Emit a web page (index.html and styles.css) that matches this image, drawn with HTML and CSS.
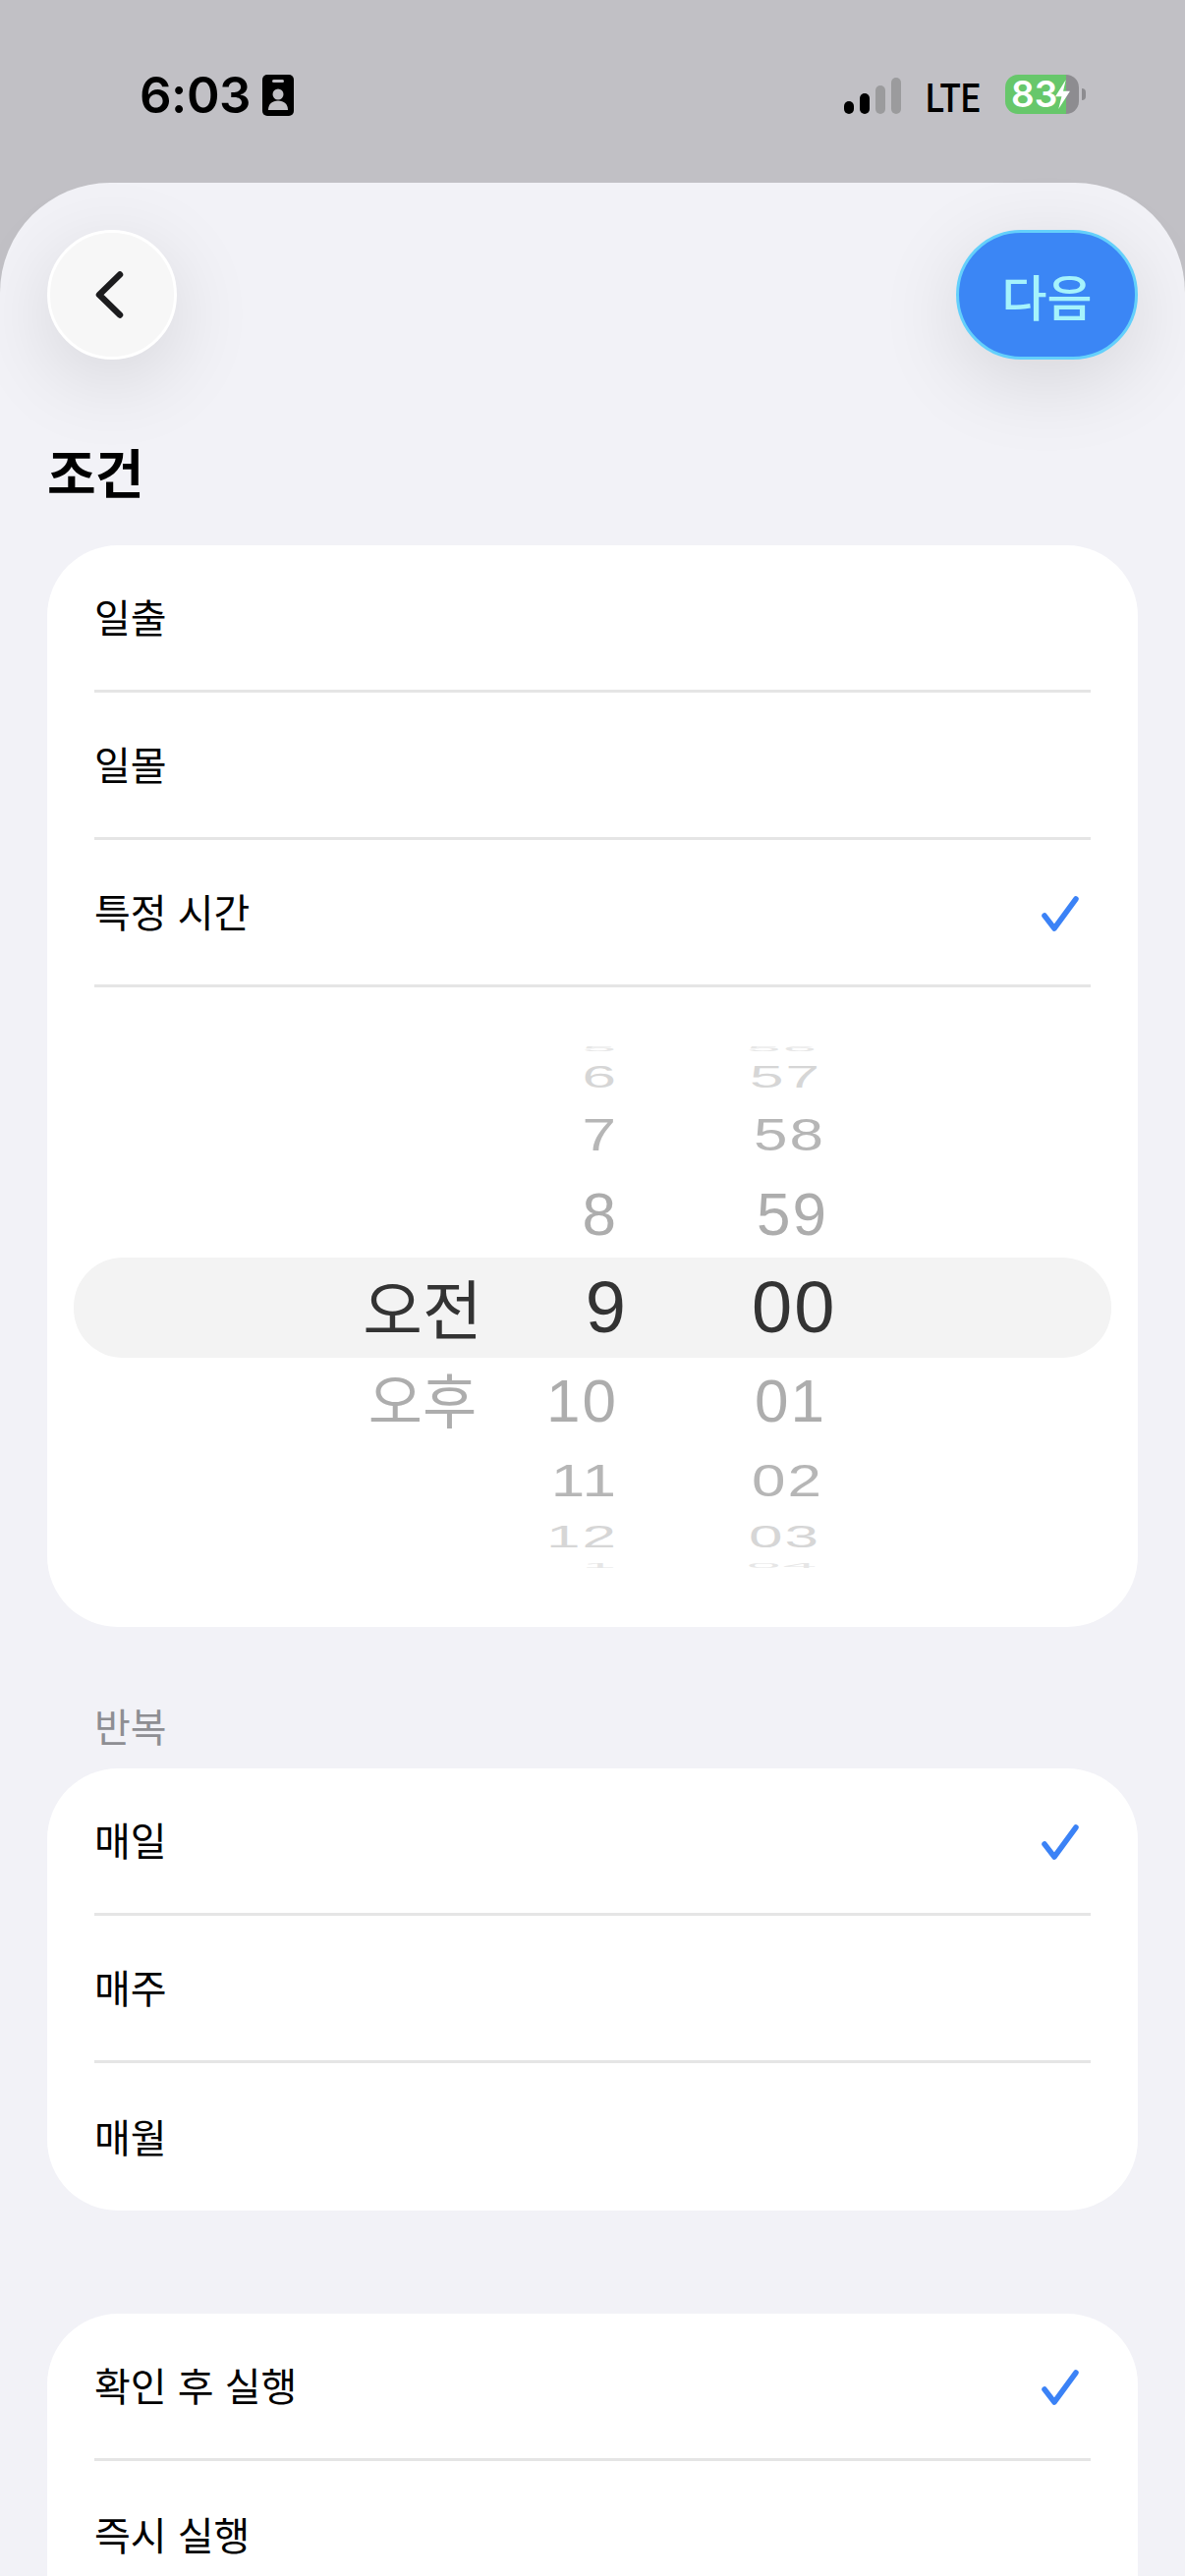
FILE: index.html
```html
<!DOCTYPE html>
<html lang="ko">
<head>
  <meta charset="UTF-8">
  <title>조건</title>
  <meta name="viewport" content="width=device-width, initial-scale=1.0">
  <link rel="stylesheet" href="styles.css">
</head>
<body>

<!-- status bar -->
<div class="status">
  <div class="status-left">
    <span class="time">6:03</span>
    <svg class="id-icon" viewBox="0 0 32 42">
      <rect width="32" height="42" rx="5" fill="#000"/>
      <rect x="10" y="5" width="12" height="3" rx="1.5" fill="#c1c0c5"/>
      <circle cx="16" cy="20" r="5.5" fill="#c1c0c5"/>
      <path d="M6 36c0-6 4-9.500 10-9.500s10 3.500 10 9.500z" fill="#c1c0c5"/>
    </svg>
  </div>
  <div class="status-right">
    <div class="signal">
      <span class="bar bar-1"></span>
      <span class="bar bar-2"></span>
      <span class="bar bar-3"></span>
      <span class="bar bar-4"></span>
    </div>
    <span class="lte">LTE</span>
    <div class="battery">
      <span class="battery-level">83</span>
      <svg class="bolt" viewBox="0 0 16 28">
        <path d="M11 0L1 16h6L4 28 15 11H8.500z" fill="#fff"/>
      </svg>
    </div>
    <span class="battery-nub"></span>
  </div>
</div>

<div class="sheet">

  <div class="top-actions">
    <button class="back-btn">
      <svg viewBox="0 0 32 52" width="32" height="52">
        <path d="M27 5.500L6 26l21 20.500" fill="none" stroke="#1c1c1e" stroke-width="6.500" stroke-linecap="round" stroke-linejoin="round"/>
      </svg>
    </button>
    <button class="next-btn">다음</button>
  </div>

  <h1 class="title">조건</h1>

  <!-- 조건 -->
  <div class="card card-first">
    <div class="row"><span>일출</span></div>
    <div class="row"><span>일몰</span></div>
    <div class="row">
      <span>특정 시간</span>
      <svg class="check" viewBox="0 0 38 36"><path d="M3 20l10 13L35 3" fill="none" stroke="#3b82f6" stroke-width="5.500" stroke-linecap="round" stroke-linejoin="round"/></svg>
    </div>

    <div class="picker">
      <div class="picker-band"></div>
      <div class="wheels">
        <div class="wheel wheel-ampm">
          <div class="item r1"></div>
          <div class="item r2"></div>
          <div class="item r3"></div>
          <div class="item r4"></div>
          <div class="item r5">오전</div>
          <div class="item r6">오후</div>
          <div class="item r7"></div>
          <div class="item r8"></div>
          <div class="item r9"></div>
        </div>
        <div class="wheel wheel-hour">
          <div class="item r1">5</div>
          <div class="item r2">6</div>
          <div class="item r3">7</div>
          <div class="item r4">8</div>
          <div class="item r5">9</div>
          <div class="item r6">10</div>
          <div class="item r7">11</div>
          <div class="item r8">12</div>
          <div class="item r9">1</div>
        </div>
        <div class="wheel wheel-min">
          <div class="item r1">56</div>
          <div class="item r2">57</div>
          <div class="item r3">58</div>
          <div class="item r4">59</div>
          <div class="item r5">00</div>
          <div class="item r6">01</div>
          <div class="item r7">02</div>
          <div class="item r8">03</div>
          <div class="item r9">04</div>
        </div>
      </div>
    </div>
  </div>

  <!-- 반복 -->
  <div class="section-label">반복</div>
  <div class="card">
    <div class="row">
      <span>매일</span>
      <svg class="check" viewBox="0 0 38 36"><path d="M3 20l10 13L35 3" fill="none" stroke="#3b82f6" stroke-width="5.500" stroke-linecap="round" stroke-linejoin="round"/></svg>
    </div>
    <div class="row"><span>매주</span></div>
    <div class="row row-last"><span>매월</span></div>
  </div>

  <!-- 실행 -->
  <div class="card card-run">
    <div class="row">
      <span>확인 후 실행</span>
      <svg class="check" viewBox="0 0 38 36"><path d="M3 20l10 13L35 3" fill="none" stroke="#3b82f6" stroke-width="5.500" stroke-linecap="round" stroke-linejoin="round"/></svg>
    </div>
    <div class="row row-last"><span>즉시 실행</span></div>
  </div>

</div>

</body>
</html>
```

FILE: styles.css
```css
html, body {
  margin: 0;
  padding: 0;
  height: 2622px;
  overflow: hidden;
}

body {
  font-family: "Noto Sans CJK KR", "Noto Sans", sans-serif;
  background: #c1c0c5;
  color: #000;
}

/* status bar */
.status {
  height: 186px;
  box-sizing: border-box;
  display: flex;
  justify-content: space-between;
  padding: 76px 101px 0 142px;
}

.status-left {
  display: flex;
  align-items: flex-start;
  gap: 12px;
}

.time {
  font-family: Inter, sans-serif;
  font-size: 51px;
  font-weight: 600;
  line-height: 42px;
  letter-spacing: -.5px;
}

.id-icon {
  width: 32px;
  height: 42px;
}

.status-right {
  display: flex;
  align-items: flex-start;
}

.signal {
  display: flex;
  align-items: flex-end;
  gap: 6px;
  height: 40px;
  margin-right: 25px;
}

.bar {
  width: 10px;
  border-radius: 5px;
  background: #000;
}

.bar-1 { height: 13px; }
.bar-2 { height: 21px; }
.bar-3 { height: 29px; background: #9b9b9d; }
.bar-4 { height: 37px; background: #9b9b9d; }

.lte {
  font-family: Roboto, sans-serif;
  font-size: 40px;
  font-weight: 500;
  line-height: 40px;
  width: 57px;
  margin-top: 5px;
  margin-right: 24px;
  transform: scaleX(.87);
  transform-origin: left center;
}

.battery {
  width: 75px;
  height: 40px;
  border-radius: 13px;
  background: linear-gradient(90deg, #67c76b 62px, #8d8c90 62px);
  display: flex;
  align-items: center;
  padding-left: 6px;
  box-sizing: border-box;
}

.battery-level {
  font-family: Inter, sans-serif;
  font-size: 37px;
  font-weight: 600;
  color: #fff;
  line-height: 40px;
}

.bolt {
  width: 17px;
  height: 32px;
  margin-left: -3px;
}

.battery-nub {
  width: 4px;
  height: 12px;
  margin: 14px 0 0 3px;
  border-radius: 0 6px 6px 0;
  background: #8d8c90;
}

/* sheet */
.sheet {
  background: #f2f2f7;
  border-radius: 112px 112px 0 0;
  padding: 48px 48px 0;
  height: 2436px;
  box-sizing: border-box;
}

.top-actions {
  display: flex;
  justify-content: space-between;
  height: 132px;
}

.back-btn {
  width: 132px;
  height: 132px;
  padding: 0 7px 0 0;
  border: 3px solid #fff;
  border-radius: 50%;
  background: #f7f7f7;
  box-shadow: 0 20px 85px rgba(0, 0, 0, .12);
  display: flex;
  align-items: center;
  justify-content: center;
}

.next-btn {
  width: 185px;
  height: 132px;
  padding: 0;
  border: 3px solid #64d0fb;
  border-radius: 66px;
  background: #3b86f5;
  box-shadow: 0 20px 85px rgba(0, 0, 0, .12);
  color: #a5f3fc;
  font-family: "Noto Sans CJK KR", sans-serif;
  font-size: 50px;
  font-weight: 500;
}

.title {
  margin: 78px 0 0;
  font-size: 54px;
  font-weight: 700;
  line-height: 72px;
  height: 72px;
  letter-spacing: -1px;
}

.card {
  background: #fff;
  border-radius: 72px;
  padding: 0 48px;
}

.card-first {
  margin-top: 39px;
}

.row {
  height: 150px;
  box-sizing: border-box;
  padding-bottom: 3px;
  border-bottom: 3px solid #e5e5e5;
  display: flex;
  align-items: center;
  justify-content: space-between;
  font-size: 40px;
}

.row-last {
  border-bottom: none;
}

.check {
  width: 38px;
  height: 36px;
  margin: 6px 12px 0 0;
}

.section-label {
  margin: 78px 0 0 48px;
  height: 66px;
  font-size: 40px;
  line-height: 44px;
  color: #8e8e93;
}

.card-run {
  margin-top: 105px;
  height: 500px;
}

/* time picker */
.picker {
  position: relative;
  height: 651px;
  margin: 0 -48px;
}

.picker-band {
  position: absolute;
  left: 27px;
  right: 27px;
  top: 275px;
  height: 102px;
  border-radius: 50px;
  background: #f3f3f3;
}

.wheels {
  position: relative;
  display: flex;
  padding-top: 55px;
  color: #adadad;
  font-family: "Liberation Sans", sans-serif;
  font-size: 62px;
  letter-spacing: 2px;
}

.wheel {
  display: flex;
  flex-direction: column;
}

.wheel-ampm {
  width: 250px;
  margin-left: 257px;
  font-family: "Noto Sans CJK KR", sans-serif;
  font-size: 60px;
  letter-spacing: 0;
}

.wheel-hour {
  width: 74px;
}

.wheel-min {
  width: 120px;
  margin-left: 131px;
}

.item {
  display: flex;
  align-items: center;
  box-sizing: border-box;
  white-space: nowrap;
}

.wheel-ampm .item { justify-content: center; }
.wheel-hour .item { justify-content: flex-end; }

.r1 { height: 14px; color: #e6e6e6; }
.r2 { height: 44px; color: #d6d6d6; }
.r3 { height: 72px; color: #b6b6b6; }
.r4 { height: 90px; }
.r5 { height: 100px; color: #333; font-size: 74px; }
.r6 { height: 90px; }
.r7 { height: 73px; color: #b6b6b6; }
.r8 { height: 42px; color: #d6d6d6; }
.r9 { height: 16px; color: #e6e6e6; }

/* wheel rows flatten towards the edges */
.wheel-hour .r1, .wheel-min .r1, .wheel-hour .r9, .wheel-min .r9 { transform: scaleY(.13); }
.wheel-hour .r2, .wheel-min .r2, .wheel-hour .r8, .wheel-min .r8 { transform: scaleY(.5); }
.wheel-hour .r3, .wheel-min .r3, .wheel-hour .r7, .wheel-min .r7 { transform: scaleY(.76); }

.wheel-ampm .r5 { font-size: 66px; padding-bottom: 3px; }
.wheel-ampm .r6 { padding-bottom: 5px; }

.wheel-hour .r5 { transform: translateX(10px); }

.wheel-min .r2 { padding-left: 3px; }
.wheel-min .r3 { padding-left: 7px; }
.wheel-min .r4 { padding-left: 10px; }
.wheel-min .r5 { padding-left: 5px; }
.wheel-min .r6 { padding-left: 8px; }
.wheel-min .r7 { padding-left: 5px; }
.wheel-min .r8 { padding-left: 2px; }
```
